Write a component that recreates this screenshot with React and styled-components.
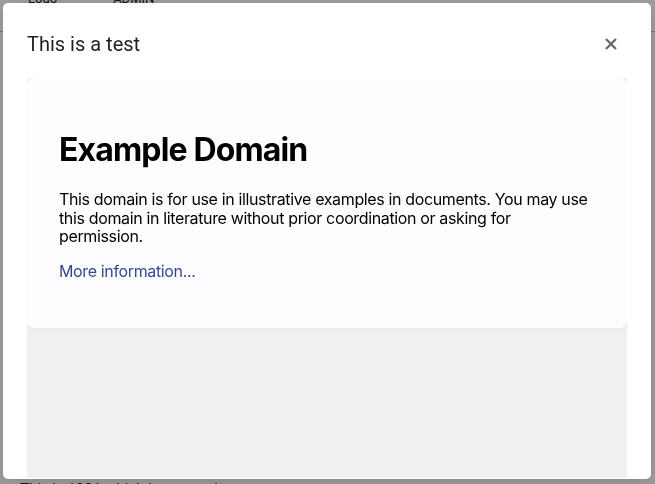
import React from "react";
import styled, { createGlobalStyle } from "styled-components";

const Global = createGlobalStyle`
  html, body { margin: 0; padding: 0; height: 100%; }
  body { font-family: Roboto, "Liberation Sans", sans-serif; background: #fff; overflow: hidden; }
  #root { height: 100%; }
`;

const Page = styled.div`
  height: 100%;
  display: flex;
  flex-direction: column;
  background: #fff;
  color: #333;
  font-family: Roboto, "Liberation Sans", sans-serif;
`;

const TopNav = styled.div`
  display: flex;
  gap: 56px;
  padding: 0 0 0 28px;
  margin-top: -9px;
  height: 40px;
  font-size: 13px;
  color: #222;
  border-bottom: 1px solid #bbb;
`;

const PageBody = styled.div`
  flex: 1;
  display: flex;
  flex-direction: column;
  justify-content: flex-end;
  padding: 0 0 0 20px;
`;

const FooterText = styled.div`
  font-size: 15px;
  color: #222;
  margin-bottom: -14px;
`;

const Backdrop = styled.div`
  position: fixed;
  inset: 0;
  background: rgba(0, 0, 0, 0.38);
  display: flex;
  padding: 3px 4px 5px 3px;
  box-sizing: border-box;
`;

const Modal = styled.div`
  flex: 1;
  background: #fff;
  border-radius: 5px;
  display: flex;
  flex-direction: column;
  padding: 0 24px 1px;
  overflow: hidden;
  box-shadow: 0 4px 16px rgba(0, 0, 0, 0.15);
`;

const Header = styled.div`
  display: flex;
  align-items: center;
  justify-content: space-between;
  height: 75px;
  padding-top: 7px;
  box-sizing: border-box;
`;

const Title = styled.h2`
  margin: 0;
  font-family: Roboto, "Liberation Sans", sans-serif;
  font-size: 20px;
  font-weight: 400;
  color: #1f1f1f;
  line-height: 32px;
`;

const CloseButton = styled.button`
  width: 32px;
  height: 32px;
  border: 0;
  background: transparent;
  padding: 0;
  display: flex;
  align-items: center;
  justify-content: center;
  cursor: pointer;
  color: #666;
`;

const Frame = styled.div`
  flex: 1;
  background: #f0f0f2;
  overflow: hidden;
  font-family: Inter, "Open Sans", "Liberation Sans", sans-serif;
`;

const Card = styled.div`
  background: #fdfdff;
  padding: 32px;
  border-radius: 8px;
  box-shadow: 2px 3px 7px 2px rgba(0, 0, 0, 0.02);
`;

const H1 = styled.h1`
  font-size: 32px;
  font-weight: 700;
  margin: 21px 0;
  line-height: 38px;
  color: #000;
  letter-spacing: -0.85px;
`;

const P = styled.p`
  font-size: 16px;
  line-height: 18.5px;
  margin: 16px 0;
  color: #000;
  letter-spacing: -0.36px;
`;

const Link = styled.a`
  color: #38488f;
  text-decoration: none;
`;

function CloseIcon() {
  return (
    <svg width="12" height="12" viewBox="0 0 12 12" aria-hidden="true">
      <path d="M1 1 L11 11 M11 1 L1 11" stroke="currentColor" strokeWidth="2.2" strokeLinecap="butt" />
    </svg>
  );
}

export default function App() {
  return (
    <>
      <Global />
      <Page>
        <TopNav>
          <span>Logo</span>
          <span>ADMIN</span>
        </TopNav>
        <PageBody>
          <FooterText>This is 1001 which is a record</FooterText>
        </PageBody>
      </Page>
      <Backdrop>
        <Modal>
          <Header>
            <Title>This is a test</Title>
            <CloseButton aria-label="Close">
              <CloseIcon />
            </CloseButton>
          </Header>
          <Frame>
            <Card>
              <H1>Example Domain</H1>
              <P>
                This domain is for use in illustrative examples in documents. You may use
                <br />
                this domain in literature without prior coordination or asking for
                <br />
                permission.
              </P>
              <P>
                <Link href="#">More information...</Link>
              </P>
            </Card>
          </Frame>
        </Modal>
      </Backdrop>
    </>
  );
}
